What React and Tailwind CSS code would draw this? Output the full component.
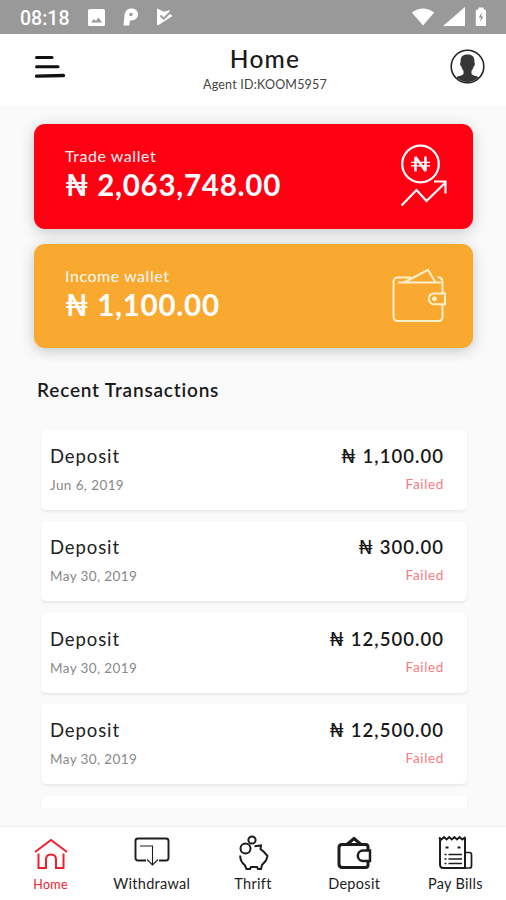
import { useState } from "react";

const transactions = [
    { type: "Deposit", date: "Jun 6, 2019", amount: "1,100.00", status: "Failed" },
    { type: "Deposit", date: "May 30, 2019", amount: "300.00", status: "Failed" },
    { type: "Deposit", date: "May 30, 2019", amount: "12,500.00", status: "Failed" },
    { type: "Deposit", date: "May 30, 2019", amount: "12,500.00", status: "Failed" },
];

function StatusBar() {
    return (
        <div className="flex h-[34px] shrink-0 items-center bg-[#999999] pl-5 pr-[19px] text-white">
            <span className="w-[51px] whitespace-nowrap pt-[3px] font-['Roboto',sans-serif] text-[19.500px] font-medium leading-none">08:18</span>
            <svg className="ml-[17px]" width="17" height="17" viewBox="0 0 17 17">
                <rect width="17" height="17" rx="1.5" fill="#fff" />
                <path d="M3 13.500 6 10l2 2 2.500-3.500 3.500 5z" fill="#999" />
            </svg>
            <svg className="ml-[18px]" width="16" height="18" viewBox="0 0 16 18">
                <path d="M1.500 7.500C2 3 4.500.5 8.500.5c4 0 6.500 2.300 6.500 5.800 0 4-3 6.200-7 6.200H7l-.8 5H.5z" fill="#fff" />
                <circle cx="8" cy="6.500" r="1.700" fill="#999" />
            </svg>
            <svg className="ml-[17px]" width="18" height="18" viewBox="0 0 18 18">
                <path d="M1 .5 8 3.800 14 2l-1.300 2.700L16.500 8 2.500 17Q1 17.500 1 16z" fill="#fff" />
                <path d="m4.500 7.500 3.200 3.200L14 4.500" fill="none" stroke="#999" strokeWidth="1.800" />
            </svg>
            <div className="ml-auto flex items-center">
                <svg width="24" height="18" viewBox="0 0 24 18">
                    <path d="M.8 4.500Q12-3.500 23.200 4.500L12 17.500z" fill="#fff" />
                </svg>
                <svg className="ml-2" width="22" height="20" viewBox="0 0 22 20">
                    <path d="M22 0v19H0z" fill="#fff" />
                </svg>
                <svg className="ml-[10px]" width="12" height="20" viewBox="0 0 12 20">
                    <path d="M3.500 2V.5h5V2L11 3.500V19H.8V3.500z" fill="#fff" />
                    <path d="M7 5 3.800 10.500H6L5 15l3.200-5.500H6z" fill="#888" />
                </svg>
            </div>
        </div>
    );
}

function Header() {
    return (
        <header className="flex h-[72px] shrink-0 items-start justify-between bg-white pl-[34px] pr-[21px]">
            <button className="mt-[21px]">
                <svg width="32" height="24" viewBox="0 0 32 24" fill="none" stroke="#111" strokeLinecap="round">
                    <path d="M2.500 2.500h15.500" strokeWidth="3" />
                    <path d="M2.500 11.700h21.500" strokeWidth="3" />
                    <path d="M2.500 21.200 29.500 20.500" strokeWidth="3.300" />
                </svg>
            </button>
            <div className="ml-[14px] w-[140px] text-center">
                <h1 className="mt-[10px] whitespace-nowrap text-[24.500px] font-medium leading-[30px] tracking-[1.200px] text-[#1a1a1a]">Home</h1>
                <p className="mt-[3px] whitespace-nowrap text-[12.500px] leading-[15px] tracking-[0.200px] text-[#444]">Agent ID:KOOM5957</p>
            </div>
            <svg className="mt-[15px]" width="35" height="35" viewBox="0 0 35 35">
                <circle cx="17.500" cy="17.500" r="16.300" fill="#fff" stroke="#222" strokeWidth="1.600" />
                <path d="M17.500 5.500c-5.500 0-7.300 3-6.900 8-1 .5-.5 3.500.8 4 .4 2 1.200 3.300 2.100 4.200v3.300c-1 1.500-5 1.800-7.200 3.300a15.500 15.500 0 0 0 22.400 0c-2.200-1.500-6.200-1.800-7.200-3.300v-3.300c.9-.9 1.700-2.200 2.100-4.200 1.300-.5 1.800-3.500.8-4 .4-5-1.400-8-6.900-8z" fill="#363636" />
            </svg>
        </header>
    );
}

function WalletCard({ label, amount, className, children }) {
    return (
        <section className={`flex justify-between rounded-[11px] pl-[31px] text-white shadow-[0_3px_14px_rgba(60,70,70,0.28)] ${className}`}>
            <div>
                <p className="mt-[22px] text-[16px] leading-[20px] tracking-[0.550px] opacity-95">{label}</p>
                <p className="mt-px whitespace-nowrap text-[29.500px] font-bold leading-[36px] tracking-[0.750px]">₦ {amount}</p>
            </div>
            {children}
        </section>
    );
}

function TradeIcon() {
    return (
        <svg className="mr-[25px] mt-5" width="48" height="64" viewBox="0 0 48 64" fill="none" stroke="#fff" strokeWidth="2.200">
            <circle cx="20.500" cy="20" r="18.300" />
            <path d="M15.500 27.500V13l10 14V12.500" strokeWidth="2.500" strokeLinejoin="bevel" />
            <path d="M11 18.300h19M11 21.800h19" strokeWidth="1.300" />
            <path d="m1.500 61.500 15-15.500L26.500 57 46 38M34 37.500h11.500v12" />
        </svg>
    );
}

function WalletIcon() {
    return (
        <svg className="mr-[26px] mt-6" width="55" height="55" viewBox="0 0 55 55" fill="none" stroke="#fff0cc" strokeWidth="2">
            <path d="M50.500 25.500V14q0-4.500-5-5M19 9.500H6Q1.500 9.500 1.500 14v34.500q0 4.500 4.500 4.500h40q4.500 0 4.500-4.500V36.500" />
            <path d="M6 14.500h43" />
            <path d="M12 14.500 36 1.800l7.500 12.700" />
            <path d="M53 25.500H42a5.300 5.300 0 0 0 0 10.700h11z" />
            <circle cx="42.500" cy="30.800" r="2" fill="#fff0cc" strokeWidth="1" />
        </svg>
    );
}

function TransactionRow({ item }) {
    return (
        <li className="flex h-[80px] shrink-0 justify-between rounded-[5px] bg-white pl-[9px] pr-[23px] shadow-[0_2px_3px_rgba(0,0,0,0.07)]">
            <div>
                <p className="mt-[15px] text-[18.500px] leading-[22px] tracking-[0.900px] text-[#222]">{item.type}</p>
                <p className="mt-[10px] text-[13.500px] leading-[17px] tracking-[0.400px] text-[#888]">{item.date}</p>
            </div>
            <div className="text-right">
                <p className="mt-[15px] whitespace-nowrap text-[18.500px] font-semibold leading-[22px] tracking-[1.050px] text-[#181818]">₦ {item.amount}</p>
                <p className="mt-[9px] text-[13.500px] leading-[17px] tracking-[0.650px] text-[#f67c80]">{item.status}</p>
            </div>
        </li>
    );
}

function HomeIcon() {
    return (
        <svg width="36" height="34" viewBox="0 0 36 34" fill="none" stroke="currentColor" strokeWidth="2">
            <path d="M2 17 18 5l16 12" />
            <path d="M5.500 18.500V33H13v-8.500q0-5 5-5t5 5V33h7.500V18.500" />
        </svg>
    );
}

function WithdrawalIcon() {
    return (
        <svg width="36" height="34" viewBox="0 0 36 34" fill="none" stroke="currentColor">
            <path d="M12 25.500H4q-2.500 0-2.500-2.500V6Q1.500 3.500 4 3.500h28q2.500 0 2.500 2.500v17q0 2.500-2.500 2.500h-7" strokeWidth="1.900" />
            <path d="M6 11h12.500v18.500M13 24.500l5.500 5.500L24 24.500" strokeWidth="1.100" />
        </svg>
    );
}

function ThriftIcon() {
    return (
        <svg width="36" height="36" viewBox="0 0 36 36" fill="none" stroke="currentColor" strokeWidth="2">
            <circle cx="10.500" cy="13.500" r="5" />
            <circle cx="17" cy="5" r="3.600" />
            <path d="M5.200 20.500c0 5 1.700 7.500 4.500 9.500l1.800 4H15l1-2h6l1 2h3l1-4 4-4.500L32.500 21l-3.500-4-3.500-3 .5-3.500-6.500.7" />
        </svg>
    );
}

function DepositIcon() {
    return (
        <svg width="36" height="36" viewBox="0 0 36 36" fill="none" stroke="currentColor" strokeWidth="3">
            <path d="M32 16v-4q0-2.500-2.500-2.500H6Q3 9.500 3 12.500V29q0 3.500 3.500 3.500H29.500q2.500 0 2.500-2.500v-4" />
            <path d="M11.500 9 18 3.500 24.500 9" />
            <path d="M34 15.500h-7a5.200 5.200 0 0 0 0 10.400h7z" strokeWidth="2.500" />
        </svg>
    );
}

function BillsIcon() {
    return (
        <svg width="36" height="36" viewBox="0 0 36 36" fill="none" stroke="currentColor">
            <path d="M28 3v30H6.500Q3 33 3 29.500V3" strokeWidth="2" />
            <path d="m2 2.500 2.500 2L7 2l2.600 2.500L12.200 2l2.600 2.500L17.400 2 20 4.500 22.600 2l2.600 2.500L28.500 2" strokeWidth="1.800" />
            <path d="M28 17.500h4.500q2 0 2 2V31q0 2-2 2H28" strokeWidth="1.700" />
            <path d="M8.500 12.500h3M20.500 12.500h3" strokeWidth="2" />
            <path d="M11.500 19.500H25M11.500 24H25M11.500 28.500H25" strokeWidth="1.600" />
            <path d="M7.500 19.500h2M7.500 24h2M7.500 28.500h2" strokeWidth="1.600" />
        </svg>
    );
}

const tabs = [
    { name: "Home", Icon: HomeIcon },
    { name: "Withdrawal", Icon: WithdrawalIcon },
    { name: "Thrift", Icon: ThriftIcon },
    { name: "Deposit", Icon: DepositIcon },
    { name: "Pay Bills", Icon: BillsIcon },
];

export default function App() {

    const [activeTab, setActiveTab] = useState("Home");

    return (
        <div className="flex h-[900px] w-[506px] flex-col overflow-hidden bg-[#fafafa] font-['Lato',sans-serif]">
            <StatusBar />
            <Header />

            <div className="flex h-[255px] shrink-0 flex-col gap-[15px] overflow-hidden pl-[34px] pr-[33px] pt-[18px]">
                <WalletCard label="Trade wallet" amount="2,063,748.00" className="h-[105px] bg-[#ff0012]">
                    <TradeIcon />
                </WalletCard>
                <WalletCard label="Income wallet" amount="1,100.00" className="h-[104px] bg-[#f9a830]">
                    <WalletIcon />
                </WalletCard>
            </div>

            <h2 className="ml-[37px] mt-[17px] text-[19px] font-semibold leading-6 tracking-[0.800px] text-[#1b1b1b]">Recent Transactions</h2>

            <ul className="mt-[22px] flex h-[384px] shrink-0 flex-col gap-[11.400px] overflow-hidden pl-[41px] pr-[39px] pt-[6px]">
                {transactions.map((item, index) => {
                    return <TransactionRow key={index} item={item} />;
                })}
                <li className="h-[80px] shrink-0 rounded-[5px] bg-white shadow-[0_2px_3px_rgba(0,0,0,0.07)]"></li>
            </ul>

            <nav className="mt-auto grid h-[73px] shrink-0 grid-cols-5 bg-white shadow-[0_-1px_2px_rgba(0,0,0,0.06)]">
                {tabs.map(({ name, Icon }) => {
                    const active = name === activeTab;
                    return (
                        <button
                            key={name}
                            onClick={() => setActiveTab(name)}
                            className={`flex flex-col items-center pt-[8px] ${active ? "text-[#f0202c]" : "text-[#1c1c1c]"}`}
                        >
                            <span className="flex h-[36px] items-start">
                                <Icon />
                            </span>
                            <span className={`whitespace-nowrap leading-[18px] tracking-[0.300px] ${active ? "mt-[5px] text-[12.500px]" : "mt-[4px] text-[14.500px]"}`}>{name}</span>
                        </button>
                    );
                })}
            </nav>
        </div>
    );
}
